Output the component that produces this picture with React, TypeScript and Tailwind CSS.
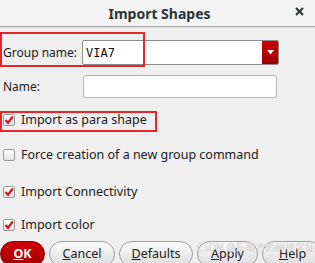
import React from 'react';

const FONT = { fontFamily: '"Noto Sans", "Noto Sans CJK SC", sans-serif' };

function Check({ checked }: { checked: boolean }) {
  return (
    <div className="w-[12px] h-[12px] rounded-[2px] border border-[#9a9a9a] bg-gradient-to-b from-[#ffffff] to-[#e4e4e4] flex items-center justify-center shrink-0">
      {checked && (
        <svg width="10" height="10" viewBox="0 0 10 10">
          <path d="M1.5 5 L4 7.8 L8.8 1.5" fill="none" stroke="#d0101a" strokeWidth="2.2" />
        </svg>
      )}
    </div>
  );
}

function CheckRow({ label, checked }: { label: string; checked: boolean }) {
  return (
    <div className="flex items-center gap-[6px] pl-[3px] h-[12px]">
      <Check checked={checked} />
      <span className="text-[12.5px] text-[#202020] leading-none">{label}</span>
    </div>
  );
}

function Btn({ label, primary, w }: { label: string; primary?: boolean; w: string }) {
  return (
    <div
      className={
        primary
          ? `${w} h-[26px] shrink-0 rounded-[13px] bg-gradient-to-b from-[#d20000] to-[#a00000] border border-[#8a0000] text-white font-bold flex items-center justify-center text-[12.5px]`
          : `${w} h-[26px] shrink-0 rounded-[13px] bg-gradient-to-b from-[#fbfbfb] to-[#dcdcdc] border border-[#9e9e9e] text-[#202020] flex items-center justify-center text-[12.5px]`
      }
    >
      <span className="underline">{label.slice(0, 1)}</span>
      {label.slice(1)}
    </div>
  );
}

export default function App() {
  return (
    <div className="w-[315px] h-[263px] bg-[#efefef] relative overflow-hidden" style={FONT}>
      {/* Title bar */}
      <div className="h-[27px] bg-[#f3f3f3] border-b border-[#a8a8a8] flex items-center justify-center relative">
        <span className="text-[14px] font-bold text-[#2e3436] pl-[4px]">Import Shapes</span>
        <svg className="absolute right-[11px] top-[7px]" width="9" height="9" viewBox="0 0 9 9">
          <path d="M1 1 L8 8 M8 1 L1 8" stroke="#2e3436" strokeWidth="2" />
        </svg>
      </div>
      <div className="h-[1px] bg-[#dcdcdc]" />

      {/* Group name */}
      <div className="flex items-center mt-[12px] h-[25px]">
        <span className="w-[82px] pl-[3px] text-[12px] text-[#202020]">Group name:</span>
        <div className="w-[197px] h-[25px] flex border border-[#8c8c8c] rounded-[2px] bg-white overflow-hidden">
          <div className="flex-1 flex items-center pl-[3px] text-[12px] text-[#101010]" style={{ fontFamily: '"DejaVu Sans Mono", monospace' }}>
            VIA7
          </div>
          <div className="w-[16px] bg-gradient-to-b from-[#d00000] to-[#9a0000] flex items-center justify-center">
            <svg width="7" height="5" viewBox="0 0 7 5">
              <path d="M0 0 H7 L3.5 4.5 Z" fill="#fff" />
            </svg>
          </div>
        </div>
      </div>

      {/* Name */}
      <div className="flex items-center mt-[10px] h-[23px]">
        <span className="w-[83px] pl-[3px] text-[12px] text-[#202020]">Name:</span>
        <div className="w-[194px] h-[23px] border border-[#b4b4b4] rounded-[3px] bg-white" />
      </div>

      <div className="flex flex-col gap-[23px] mt-[16px]">
        <CheckRow label="Import as para shape" checked />
        <CheckRow label="Force creation of a new group command" checked={false} />
      </div>
      <div className="flex flex-col gap-[21px] mt-[25px]">
        <CheckRow label="Import Connectivity" checked />
        <CheckRow label="Import color" checked />
      </div>

      {/* Buttons */}
      <div className="flex gap-[4px] mt-[10px]">
        <Btn label="OK" primary w="w-[45px]" />
        <Btn label="Cancel" w="w-[66px]" />
        <Btn label="Defaults" w="w-[74px]" />
        <Btn label="Apply" w="w-[61px]" />
        <Btn label="Help" w="w-[61px]" />
      </div>

      {/* Annotation boxes */}
      <div className="absolute left-0 top-[32px] w-[145px] h-[35px] border-2 border-[#e8252b]" />
      <div className="absolute left-0 top-[111px] w-[157px] h-[21px] border-2 border-[#e8252b]" />

      {/* Watermark */}
      <div className="absolute left-[197px] top-[240px] text-[10px] text-[#f4f4f4]/70 whitespace-nowrap pointer-events-none" style={{ textShadow: '0 0 1px #b0b0b0' }}>
        CSDN @东南方的树枝学徒
      </div>
    </div>
  );
}
